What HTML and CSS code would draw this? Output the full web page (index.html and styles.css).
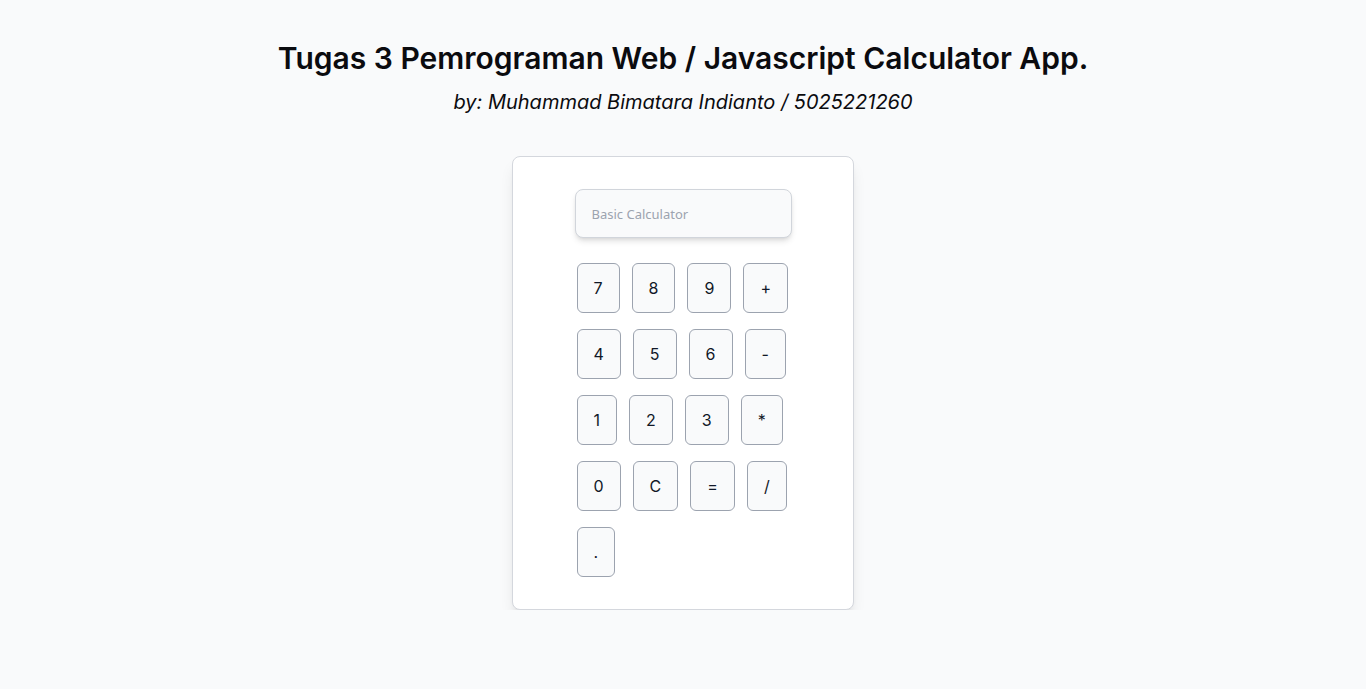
FILE: index.html
```html
<!DOCTYPE html>
<html lang="en">
<head>
<meta charset="utf-8">
<title>Calculator</title>
<link rel="stylesheet" href="styles.css">
</head>
<body>
<header class="head">
  <h1 class="title">Tugas 3 Pemrograman Web / Javascript Calculator App.</h1>
  <p class="subtitle">by: Muhammad Bimatara Indianto / 5025221260</p>
</header>
<main class="card">
  <input class="display" type="text" placeholder="Basic Calculator">
  <div class="keys">
    <div class="row"><button class="key">7</button><button class="key">8</button><button class="key">9</button><button class="key">+</button></div>
    <div class="row"><button class="key">4</button><button class="key">5</button><button class="key">6</button><button class="key">-</button></div>
    <div class="row"><button class="key">1</button><button class="key">2</button><button class="key">3</button><button class="key">*</button></div>
    <div class="row"><button class="key">0</button><button class="key">C</button><button class="key">=</button><button class="key">/</button></div>
    <div class="row"><button class="key">.</button></div>
  </div>
</main>
</body>
</html>
```
FILE: styles.css
```css
* { box-sizing: border-box; }
html, body { margin: 0; }
body {
  background: #f9fafb;
  font-family: Inter, "Noto Sans", sans-serif;
  color: #111827;
  padding-top: 40px;
  display: flex;
  flex-direction: column;
  align-items: center;
}
.head { text-align: center; }
.title {
  margin: 0;
  font-size: 30px;
  line-height: 36px;
  font-weight: 600;
  color: #0b0b0f;
}
.subtitle {
  margin: 12px 0 0;
  font-size: 20px;
  line-height: 28px;
  font-style: italic;
  color: #0b0b0f;
}
.card {
  margin-top: 40px;
  width: 342px;
  background: #fff;
  border: 1px solid #d4d7dd;
  border-radius: 8px;
  padding: 32px 0 32px;
  box-shadow: 0 10px 15px -3px rgba(0,0,0,0.1), 0 4px 6px -4px rgba(0,0,0,0.1);
  display: flex;
  flex-direction: column;
  align-items: center;
}
.display {
  width: 217px;
  height: 49px;
  border: 1px solid #d1d5db;
  border-radius: 8px;
  background: #f9fafb;
  padding: 0 16px;
  font-family: "Noto Sans", sans-serif;
  font-size: 13px;
  color: #111827;
  box-shadow: 0 4px 6px -1px rgba(0,0,0,0.12), 0 2px 4px -2px rgba(0,0,0,0.1);
  outline: none;
}
.display::placeholder { color: #9ca3af; }
.keys {
  margin-top: 25px;
  width: 213px;
  display: flex;
  flex-direction: column;
  gap: 16px;
}
.row {
  display: flex;
  gap: 12px;
}
.key {
  height: 50px;
  padding: 12px 16px;
  border: 1px solid #9ca3af;
  border-radius: 6px;
  background: #f9fafb;
  font-family: Inter, sans-serif;
  font-size: 16px;
  line-height: 24px;
  color: #111827;
  cursor: pointer;
}
```
